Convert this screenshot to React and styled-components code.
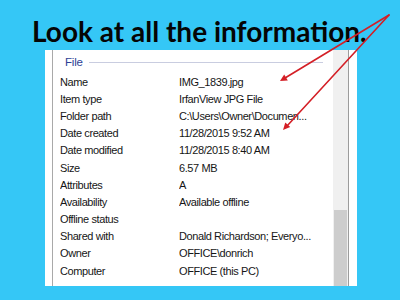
import React from "react";
import styled, { createGlobalStyle } from "styled-components";

const Global = createGlobalStyle`
  html, body { margin: 0; padding: 0; }
  body { background: #35c7f6; width: 400px; height: 300px; overflow: hidden; }
`;

const Page = styled.div`
  position: relative;
  width: 400px;
  height: 300px;
  background: #35c7f6;
  display: flex;
  flex-direction: column;
`;

const Title = styled.h1`
  margin: 0;
  padding: 14px 0 0 32px;
  height: 36px;
  font-family: Lato, "Open Sans", sans-serif;
  font-weight: 700;
  font-size: 28px;
  line-height: 34px;
  color: #050505;
  white-space: nowrap;
`;

const Panel = styled.div`
  margin-left: 45px;
  width: 312px;
  height: 236px;
  background: #ffffff;
  display: flex;
`;

const Content = styled.div`
  flex: 1;
  margin-left: 7px;
  border-left: 1px solid #a9a9a9;
  display: flex;
  flex-direction: column;
  padding-right: 10px;
`;

const GroupHeader = styled.div`
  display: flex;
  align-items: center;
  height: 24px;
  padding-left: 12px;
`;

const GroupLabel = styled.span`
  font-family: "Liberation Sans", Arial, sans-serif;
  font-size: 11.5px;
  letter-spacing: -0.2px;
  color: #2e3f95;
  margin-right: 6px;
`;

const GroupRule = styled.div`
  flex: 1;
  height: 1px;
  background: #c9cde0;
`;

const Rows = styled.div`
  display: flex;
  flex-direction: column;
  margin-top: -1px;
  padding-left: 7px;
`;

const Row = styled.div`
  display: grid;
  grid-template-columns: 119px 1fr;
  height: 17.2px;
  align-items: center;
  font-family: "Liberation Sans", Arial, sans-serif;
  font-size: 11px;
  letter-spacing: -0.4px;
  color: #161616;
  white-space: nowrap;
`;

const Cell = styled.span`
  overflow: hidden;
`;

const Scrollbar = styled.div`
  width: 15px;
  background: #f0f0f0;
  display: flex;
  flex-direction: column;
  justify-content: flex-end;
`;

const Thumb = styled.div`
  height: 76px;
  margin: 0 1px;
  background: #cdcdcd;
`;

const Divider = styled.div`
  width: 1px;
  background: #9c9c9c;
  margin-right: 8px;
`;

const Overlay = styled.svg`
  position: absolute;
  left: 0;
  top: 0;
  pointer-events: none;
`;

const rows = [
  ["Name", "IMG_1839.jpg"],
  ["Item type", "IrfanView JPG File"],
  ["Folder path", "C:\\Users\\Owner\\Documen..."],
  ["Date created", "11/28/2015 9:52 AM"],
  ["Date modified", "11/28/2015 8:40 AM"],
  ["Size", "6.57 MB"],
  ["Attributes", "A"],
  ["Availability", "Available offline"],
  ["Offline status", ""],
  ["Shared with", "Donald Richardson; Everyo..."],
  ["Owner", "OFFICE\\donrich"],
  ["Computer", "OFFICE (this PC)"],
];

export default function App() {
  return (
    <Page>
      <Global />
      <Title>Look at all the information.</Title>
      <Panel>
        <Content>
          <GroupHeader>
            <GroupLabel>File</GroupLabel>
            <GroupRule />
          </GroupHeader>
          <Rows>
            {rows.map(([k, v]) => (
              <Row key={k}>
                <Cell>{k}</Cell>
                <Cell>{v}</Cell>
              </Row>
            ))}
          </Rows>
        </Content>
        <Scrollbar>
          <Thumb />
        </Scrollbar>
        <Divider />
      </Panel>
      <Overlay width="400" height="300" viewBox="0 0 400 300">
        <g stroke="#d41f26" strokeWidth="1.6" fill="none" strokeLinecap="round">
          <line x1="389" y1="15" x2="285" y2="78" />
          <line x1="389" y1="15" x2="287" y2="126" />
        </g>
        <g fill="#d41f26">
          <polygon points="280,81 287.8,80.4 284.2,74.4" />
          <polygon points="283,130 290.2,127 285.3,122.5" />
        </g>
      </Overlay>
    </Page>
  );
}
